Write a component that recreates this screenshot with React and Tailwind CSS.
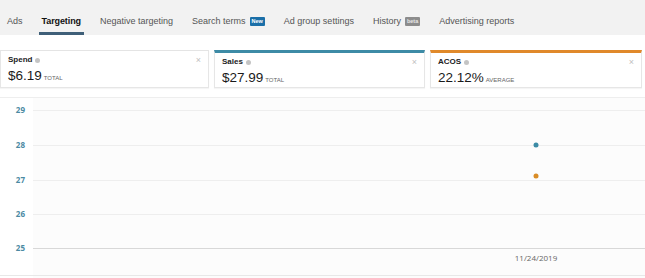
import React from 'react';

const tabs = [
    { label: 'Ads' },
    { label: 'Targeting', active: true },
    { label: 'Negative targeting' },
    { label: 'Search terms', badge: 'New', badgeClass: 'bg-[#1b6fa8] text-white' },
    { label: 'Ad group settings' },
    { label: 'History', badge: 'beta', badgeClass: 'bg-[#8c8c8c] text-[#e6e6e6]' },
    { label: 'Advertising reports' },
];

const cards = [
    { label: 'Spend', value: '$6.19', unit: 'TOTAL', top: 'border-t-[#e4e4e4] border-t' },
    { label: 'Sales', value: '$27.99', unit: 'TOTAL', top: 'border-t-[#3d8ba6] border-t-[3px]' },
    { label: 'ACOS', value: '22.12%', unit: 'AVERAGE', top: 'border-t-[#e0892a] border-t-[3px]' },
];

function MetricCard({ card }) {
    return (
        <div className={`h-[38px] bg-white border border-[#e6e6e6] shadow-[0_1px_1px_rgba(0,0,0,0.04)] px-[7px] pt-[3px] ${card.top}`}>
            <div className="flex items-center justify-between h-[12px]">
                <div className="flex items-center gap-[3px]">
                    <span className="text-[8px] font-bold text-[#222]">{card.label}</span>
                    <span className="w-[5px] h-[5px] rounded-full bg-[#c4c4c4]" />
                </div>
                <span className="text-[9px] leading-none text-[#c0c0c0]">×</span>
            </div>
            <div className="flex items-baseline gap-[2px] mt-[1px]">
                <span className="text-[13.5px] text-[#1a1a1a] leading-[18px]">{card.value}</span>
                <span className="text-[6px] text-[#666]">{card.unit}</span>
            </div>
        </div>
    );
}

function Chart() {
    const rows = [
        { v: 29, y: 13 },
        { v: 28, y: 48 },
        { v: 27, y: 83 },
        { v: 26, y: 117 },
        { v: 25, y: 151 },
    ];
    return (
        <svg width="645" height="181" className="block" style={{ fontFamily: '"Open Sans", sans-serif' }}>
            <rect x="33" y="0" width="612" height="181" fill="#fcfcfc" />
            <line x1="0" y1="0.5" x2="645" y2="0.5" stroke="#eeeeee" />
            {rows.map(r => (
                <g key={r.v}>
                    <line x1="33" y1={r.y + 0.5} x2="645" y2={r.y + 0.5} stroke={r.v === 25 ? '#d8d8d8' : '#eeeeee'} />
                    <text x="25" y={r.y + 3} textAnchor="end" fontSize="8" fontWeight="700" fill="#4b8aa3">{r.v}</text>
                </g>
            ))}
            <circle cx="536" cy="48" r="2.5" fill="#3b8ba5" />
            <circle cx="536" cy="79" r="2.5" fill="#d98c26" />
            <text x="536" y="164" textAnchor="middle" fontSize="8" fill="#666">11/24/2019</text>
            <line x1="0" y1="178.5" x2="645" y2="178.5" stroke="#e8e8e8" />
        </svg>
    );
}

export default function App() {
    return (
        <div className="w-[645px] h-[278px] overflow-hidden bg-white" style={{ fontFamily: '"Liberation Sans", Arial, sans-serif' }}>
            <div className="h-[35px] bg-[#f2f2f2] flex items-stretch pl-[7px] gap-[19px]">
                {tabs.map(t => (
                    <div
                        key={t.label}
                        className={`flex items-center gap-[4px] pt-[11px] ${t.active ? 'border-b-[3px] border-[#3f5f78] px-[3px] -mx-[3px]' : 'border-b-[3px] border-transparent'}`}
                    >
                        <span className={`text-[9px] ${t.active ? 'font-bold text-[#111] tracking-[-0.1px]' : 'text-[#555]'}`}>{t.label}</span>
                        {t.badge && (
                            <span className={`text-[5.5px] font-bold leading-none px-[2px] py-[1.5px] rounded-[1px] ${t.badgeClass}`}>{t.badge}</span>
                        )}
                    </div>
                ))}
            </div>
            <div className="grid grid-cols-[209px_211px_212px] gap-x-[5px] mt-[15px] pr-[3px]">
                {cards.map(c => <MetricCard key={c.label} card={c} />)}
            </div>
            <div className="mt-[9px]">
                <Chart />
            </div>
        </div>
    );
}
